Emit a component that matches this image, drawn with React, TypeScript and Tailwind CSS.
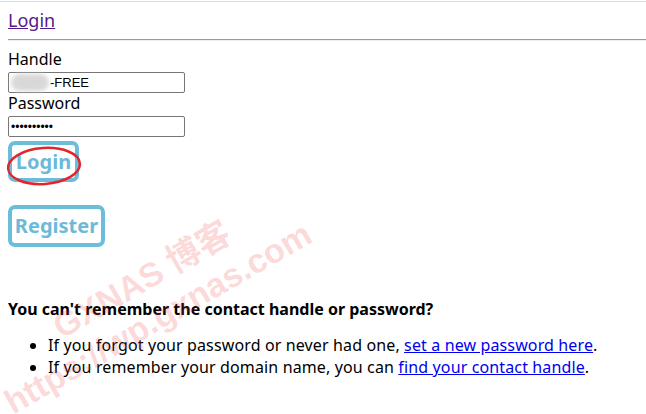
export default function App() {
  return (
    <div className="relative h-[414px] w-[646px] overflow-hidden bg-white font-['Noto_Sans',sans-serif] text-[16px] text-black">
      {/* top rule */}
      <div className="mt-px h-px bg-[#dcdcdc]" />

      <div className="px-2">
        <div className="h-[37px] pt-[6px] text-[18px] leading-[24px]">
          <a href="#" className="text-[#551a8b] underline">
            Login
          </a>
        </div>
        <div className="-mr-2 h-[2px] border-t border-b border-t-[#9a9a9a] border-b-[#eeeeee]" />

        {/* form */}
        <div className="mt-[8px] leading-[21px]">Handle</div>
        <div className="mt-[2px] flex h-[21px] w-[177px] items-center rounded-[2px] border border-[#767676] px-[2px] font-['Liberation_Sans',sans-serif] text-[13px]">
          <span className="mr-px h-[17px] w-[38px] rounded-full bg-[#d8d8d8] blur-[2px]" />
          <span>-FREE</span>
        </div>
        <div className="leading-[21px]">Password</div>
        <input
          type="password"
          readOnly
          value="abcdefghij"
          className="mt-[2px] block h-[21px] w-[177px] rounded-[2px] border border-[#767676] px-[2px] font-['Liberation_Sans',sans-serif] text-[12px] outline-none"
        />

        <div className="relative mt-[4px] w-fit">
          <button className="flex h-[41px] w-[71px] items-center justify-center rounded-[7px] border-4 border-[#6cbddb] bg-white text-[20px] font-bold text-[#6cb9d8]">
            Login
          </button>
          {/* annotation ring */}
          <svg className="pointer-events-none absolute left-[-4px] top-[4px]" width="80" height="46" viewBox="0 0 80 46">
            <ellipse cx="40" cy="21" rx="36" ry="18" fill="none" stroke="#e3262d" strokeWidth="2.5" transform="rotate(-4 40 21)" />
          </svg>
        </div>

        <button className="mt-[23px] flex h-[42px] w-[97px] items-center justify-center rounded-[7px] border-4 border-[#6cbddb] bg-white text-[20px] font-bold text-[#6cb9d8]">
          Register
        </button>

        <h4 className="mt-[52px] font-bold leading-[21px]">You can't remember the contact handle or password?</h4>
        <ul className="mt-[14px] list-disc pl-10 leading-[22px] tracking-[0.13px]">
          <li>
            If you forgot your password or never had one,{' '}
            <a href="#" className="text-[#0000ee] underline">
              set a new password here
            </a>
            .
          </li>
          <li>
            If you remember your domain name, you can{' '}
            <a href="#" className="text-[#0000ee] underline">
              find your contact handle
            </a>
            .
          </li>
        </ul>
      </div>

      {/* watermark */}
      <div className="pointer-events-none absolute left-[142px] top-[280px] -translate-x-1/2 -translate-y-1/2 -rotate-30 whitespace-nowrap font-['Liberation_Sans','Noto_Sans_CJK_SC',sans-serif] text-[34px] font-bold text-[#f03c3c]/20">
        GXNAS 博客
      </div>
      <div className="pointer-events-none absolute left-[158px] top-[318px] -translate-x-1/2 -translate-y-1/2 -rotate-30 whitespace-nowrap font-['Liberation_Sans',sans-serif] text-[34px] font-bold text-[#f03c3c]/20">
        https://wp.gxnas.com
      </div>
    </div>
  );
}
